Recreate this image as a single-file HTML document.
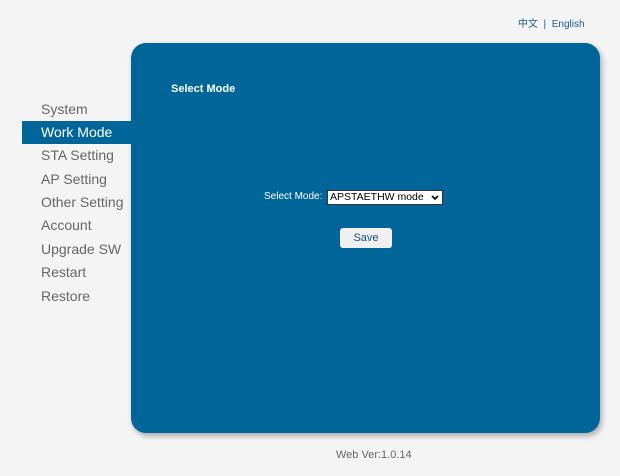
<!DOCTYPE html>
<html><head><meta charset="utf-8"><style>
body{margin:0;width:620px;height:476px;background:#f4f4f4;font-family:"Liberation Sans","Noto Sans CJK SC",sans-serif;position:relative;overflow:hidden}
.lang{position:absolute;left:518px;top:15px;font-size:10px;color:#1a5a9a}
.panel{position:absolute;left:131px;top:43px;width:469px;height:390px;background:#006699;border-radius:15px;box-shadow:2px 3px 6px rgba(0,0,0,.3)}
.menu{position:absolute;left:22px;top:97.5px;width:109px}
.menu div{height:23.4px;line-height:23.4px;padding-left:19px;font-size:14px;color:#666}
.menu .act{background:#006699;color:#fff}
.t{position:absolute;left:171px;top:83px;font-size:11px;font-weight:bold;color:#fff}
.lbl{position:absolute;left:264px;top:191px;font-size:10px;color:#fff}
.sel{position:absolute;left:327px;top:190px;height:13px;background:#fff;border:1px solid #333;font-size:10.5px;line-height:13px;color:#000;padding-left:2px;box-sizing:content-box;width:112px}
.btn{position:absolute;left:340px;top:228px;width:52px;height:20px;background:#f0f0f0;border-radius:3px;font-size:11px;text-align:center;line-height:20px;color:#1a4f80}
.ver{position:absolute;left:336px;top:449px;font-size:11px;color:#666}
</style></head><body>
<div class="lang">中文 &nbsp;| &nbsp;English</div>
<div class="panel"></div>
<div class="menu"><div>System</div><div class="act">Work Mode</div><div>STA Setting</div><div>AP Setting</div><div>Other Setting</div><div>Account</div><div>Upgrade SW</div><div>Restart</div><div>Restore</div></div>
<div class="t">Select Mode</div>
<div class="lbl">Select Mode:</div>
<div class="sel">APSTAETHW mode<svg style="position:absolute;right:3px;top:4px" width="8" height="5" viewBox="0 0 8 5"><path d="M1 1L4 4L7 1" stroke="#000" stroke-width="1.6" fill="none"/></svg></div>
<div class="btn">Save</div>
<div class="ver">Web Ver:1.0.14</div>
</body></html>
